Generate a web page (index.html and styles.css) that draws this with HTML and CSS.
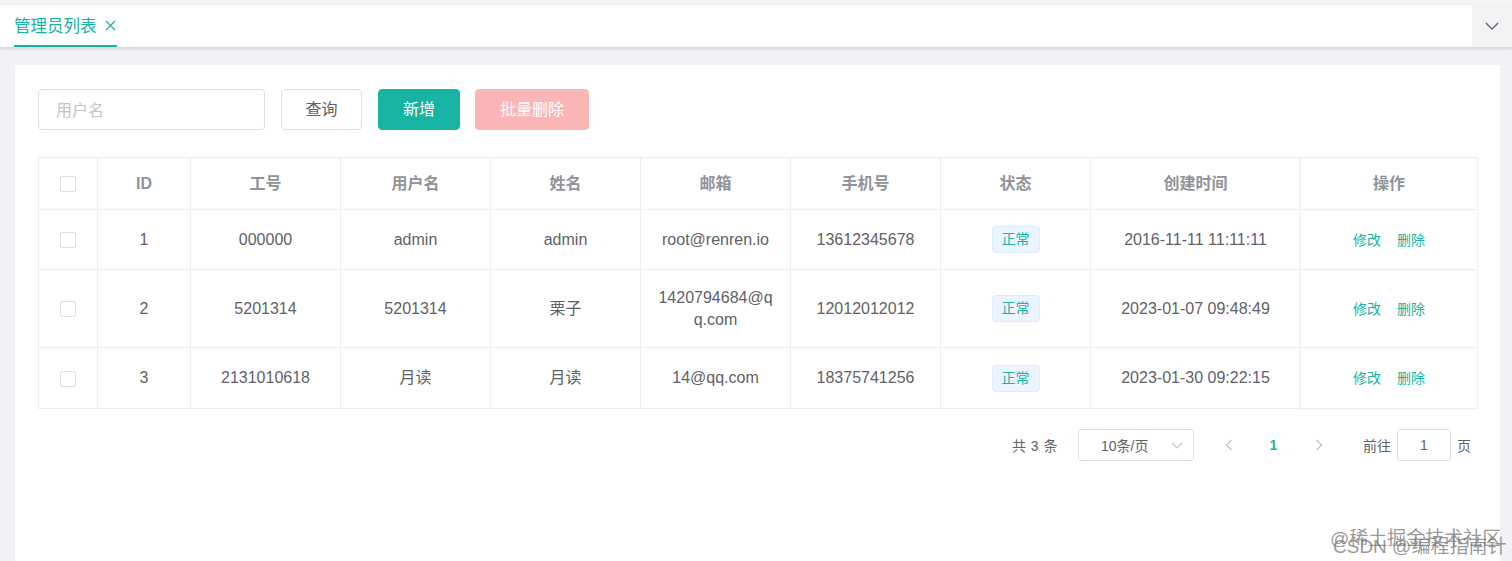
FILE: index.html
```html
<!DOCTYPE html>
<html lang="zh">
<head>
<meta charset="utf-8">
<title>管理员列表</title>
<link rel="stylesheet" href="styles.css">
</head>
<body>
<div class="page">
  <div class="tabbar">
    <div class="tab">
      <span class="tab-title">管理员列表</span>
      <svg class="tab-close" width="11" height="11" viewBox="0 0 11 11"><path d="M1 1l9 9M10 1l-9 9" fill="none" stroke="#17b3a3" stroke-width="1.2"/></svg>
    </div>
    <div class="tab-more">
      <svg width="14" height="8" viewBox="0 0 14 8"><path d="M1 1l6 6 6-6" fill="none" stroke="#606266" stroke-width="1.3"/></svg>
    </div>
  </div>

  <div class="card">
    <div class="toolbar">
      <div class="input"><span class="placeholder">用户名</span></div>
      <button class="btn btn-default">查询</button>
      <button class="btn btn-primary">新增</button>
      <button class="btn btn-danger-disabled">批量删除</button>
    </div>

    <table class="grid">
      <colgroup>
        <col class="c-check"><col class="c-id"><col class="c-150"><col class="c-150"><col class="c-150"><col class="c-150"><col class="c-150"><col class="c-150"><col class="c-time"><col class="c-op">
      </colgroup>
      <thead>
        <tr>
          <th><span class="checkbox"></span></th>
          <th>ID</th><th>工号</th><th>用户名</th><th>姓名</th><th>邮箱</th><th>手机号</th><th>状态</th><th>创建时间</th><th class="op">操作</th>
        </tr>
      </thead>
      <tbody>
        <tr class="r1">
          <td><span class="checkbox"></span></td>
          <td>1</td><td>000000</td><td>admin</td><td>admin</td><td>root@renren.io</td><td>13612345678</td>
          <td><span class="tag">正常</span></td><td>2016-11-11 11:11:11</td>
          <td class="op"><a class="link">修改</a><a class="link">删除</a></td>
        </tr>
        <tr class="r2">
          <td><span class="checkbox"></span></td>
          <td>2</td><td>5201314</td><td>5201314</td><td>栗子</td><td class="email">1420794684@qq.com</td><td>12012012012</td>
          <td><span class="tag">正常</span></td><td>2023-01-07 09:48:49</td>
          <td class="op"><a class="link">修改</a><a class="link">删除</a></td>
        </tr>
        <tr class="r3">
          <td><span class="checkbox"></span></td>
          <td>3</td><td>2131010618</td><td>月读</td><td>月读</td><td>14@qq.com</td><td>18375741256</td>
          <td><span class="tag">正常</span></td><td>2023-01-30 09:22:15</td>
          <td class="op"><a class="link">修改</a><a class="link">删除</a></td>
        </tr>
      </tbody>
    </table>

    <div class="pager">
      <span class="total">共 3 条</span>
      <div class="select">
        <span>10条/页</span>
        <svg width="12" height="7" viewBox="0 0 12 7"><path d="M1 1l5 5 5-5" fill="none" stroke="#c0c4cc" stroke-width="1.2"/></svg>
      </div>
      <span class="pbtn"><svg width="8" height="12" viewBox="0 0 8 12"><path d="M6.5 1L1.5 6l5 5" fill="none" stroke="#c0c4cc" stroke-width="1.3"/></svg></span>
      <span class="pbtn current">1</span>
      <span class="pbtn"><svg width="8" height="12" viewBox="0 0 8 12"><path d="M1.5 1l5 5-5 5" fill="none" stroke="#c0c4cc" stroke-width="1.3"/></svg></span>
      <span class="goto">前往</span>
      <div class="jump">1</div>
      <span class="unit">页</span>
    </div>
  </div>

  <div class="watermark">
    <span class="wm1">@稀土掘金技术社区</span>
    <span class="wm2">CSDN @编程指南针</span>
  </div>
</div>
</body>
</html>
```

FILE: styles.css
```css
html, body {
  margin: 0;
  padding: 0;
  height: 100%;
  overflow: hidden;
}
body {
  background: #f0f2f5;
  font-family: "Liberation Sans", "Noto Sans CJK SC", sans-serif;
  color: #606266;
}
.page {
  position: relative;
  height: 561px;
  padding-top: 2px;
  box-sizing: border-box;
  background: #f0f2f5;
  border-top: 3px solid #f5f5f6;
}
.tabbar {
  height: 42px;
  background: #fff;
  display: flex;
  justify-content: space-between;
  box-shadow: 0 2px 3px rgba(0, 0, 0, 0.12);
}
.tab {
  margin-left: 14px;
  width: 103px;
  display: flex;
  align-items: center;
  border-bottom: 2px solid #17b3a3;
  box-sizing: border-box;
  color: #17b3a3;
  padding-top: 1px;
}
.tab-title {
  font-size: 16.5px;
  line-height: 20px;
}
.tab-close {
  margin-left: 8px;
}
.tab-more {
  width: 40px;
  background: #f2f3f5;
  display: flex;
  align-items: center;
  justify-content: center;
}
.card {
  margin: 18px 12px 0 15px;
  background: #fff;
  height: 600px;
  padding: 24px 23px 0 23px;
  box-sizing: border-box;
}
.toolbar {
  display: flex;
  align-items: center;
  height: 41px;
}
.input {
  width: 227px;
  height: 41px;
  border: 1px solid #dcdfe6;
  border-radius: 4px;
  box-sizing: border-box;
  display: flex;
  align-items: center;
  padding-left: 17px;
  padding-bottom: 2px;
}
.placeholder {
  color: #c0c4cc;
  font-size: 16px;
}
.btn {
  height: 41px;
  border-radius: 4px;
  font-family: inherit;
  font-size: 16px;
  box-sizing: border-box;
  padding: 0 0 3px 0;
  margin-left: 16px;
}
.btn-default {
  width: 81px;
  background: #fff;
  border: 1px solid #dcdfe6;
  color: #606266;
}
.btn-primary {
  width: 82px;
  background: #17b3a3;
  border: 1px solid #17b3a3;
  color: #fff;
}
.btn-danger-disabled {
  width: 114px;
  margin-left: 15px;
  background: #fab6b6;
  border: 1px solid #fab6b6;
  color: #fff;
}
.grid {
  margin-top: 27px;
  width: 1439px;
  table-layout: fixed;
  border-collapse: collapse;
  border: 1px solid #ebeef5;
}
.c-check { width: 59px; }
.c-id { width: 93px; }
.c-150 { width: 150px; }
.c-time { width: 210px; }
.c-op { width: 177px; }
.grid th, .grid td {
  border: 1px solid #ebeef5;
  text-align: center;
  font-size: 16px;
  padding: 0 14px;
  line-height: 22px;
}
.grid th {
  height: 51px;
  color: #909399;
  font-weight: bold;
}
.grid td {
  color: #606266;
}
.grid th:first-child, .grid td:first-child {
  padding: 0;
}
.r1 td { height: 59px; }
.r2 td { height: 77px; }
.r3 td { height: 60px; }
.email {
  word-break: break-all;
}
.grid .op {
  box-shadow: -2px 0 4px rgba(0, 0, 0, 0.03);
}
.checkbox {
  display: inline-block;
  width: 14px;
  height: 14px;
  border: 1px solid #dcdfe6;
  border-radius: 2px;
  vertical-align: middle;
  background: #fff;
}
.tag {
  display: inline-block;
  height: 27px;
  line-height: 25px;
  padding: 0 9px;
  font-size: 14px;
  color: #17b3a3;
  background: #ecf5ff;
  border: 1px solid #d9ecff;
  border-radius: 4px;
  box-sizing: border-box;
  vertical-align: middle;
}
.link {
  color: #17b3a3;
  font-size: 14px;
  margin: 0 8px;
}
.pager {
  margin-top: 20px;
  width: 1439px;
  display: flex;
  justify-content: flex-end;
  align-items: center;
  height: 32px;
  font-size: 14px;
  color: #606266;
  padding-right: 6px;
  box-sizing: border-box;
}
.total {
  margin-right: 20px;
  letter-spacing: 0.5px;
}
.select {
  width: 116px;
  height: 32px;
  border: 1px solid #dcdfe6;
  border-radius: 3px;
  box-sizing: border-box;
  display: flex;
  align-items: center;
  justify-content: space-between;
  padding: 0 10px 0 22px;
  font-size: 14px;
  margin-right: 12px;
}
.pbtn {
  width: 45px;
  text-align: center;
  display: flex;
  align-items: center;
  justify-content: center;
}
.pbtn.current {
  color: #17b3a3;
  font-weight: bold;
}
.goto {
  margin-left: 22px;
  margin-right: 6px;
}
.jump {
  width: 54px;
  height: 32px;
  border: 1px solid #dcdfe6;
  border-radius: 3px;
  box-sizing: border-box;
  display: flex;
  align-items: center;
  justify-content: center;
}
.unit {
  margin-left: 6px;
}
.watermark {
  position: absolute;
  right: 22px;
  top: 518px;
  width: 160px;
  height: 40px;
  font-size: 19px;
  color: rgba(120, 120, 120, 0.75);
}
.wm1 {
  position: absolute;
  left: 0;
  top: 2px;
  white-space: nowrap;
}
.wm2 {
  position: absolute;
  left: 3px;
  top: 10px;
  white-space: nowrap;
}
```
